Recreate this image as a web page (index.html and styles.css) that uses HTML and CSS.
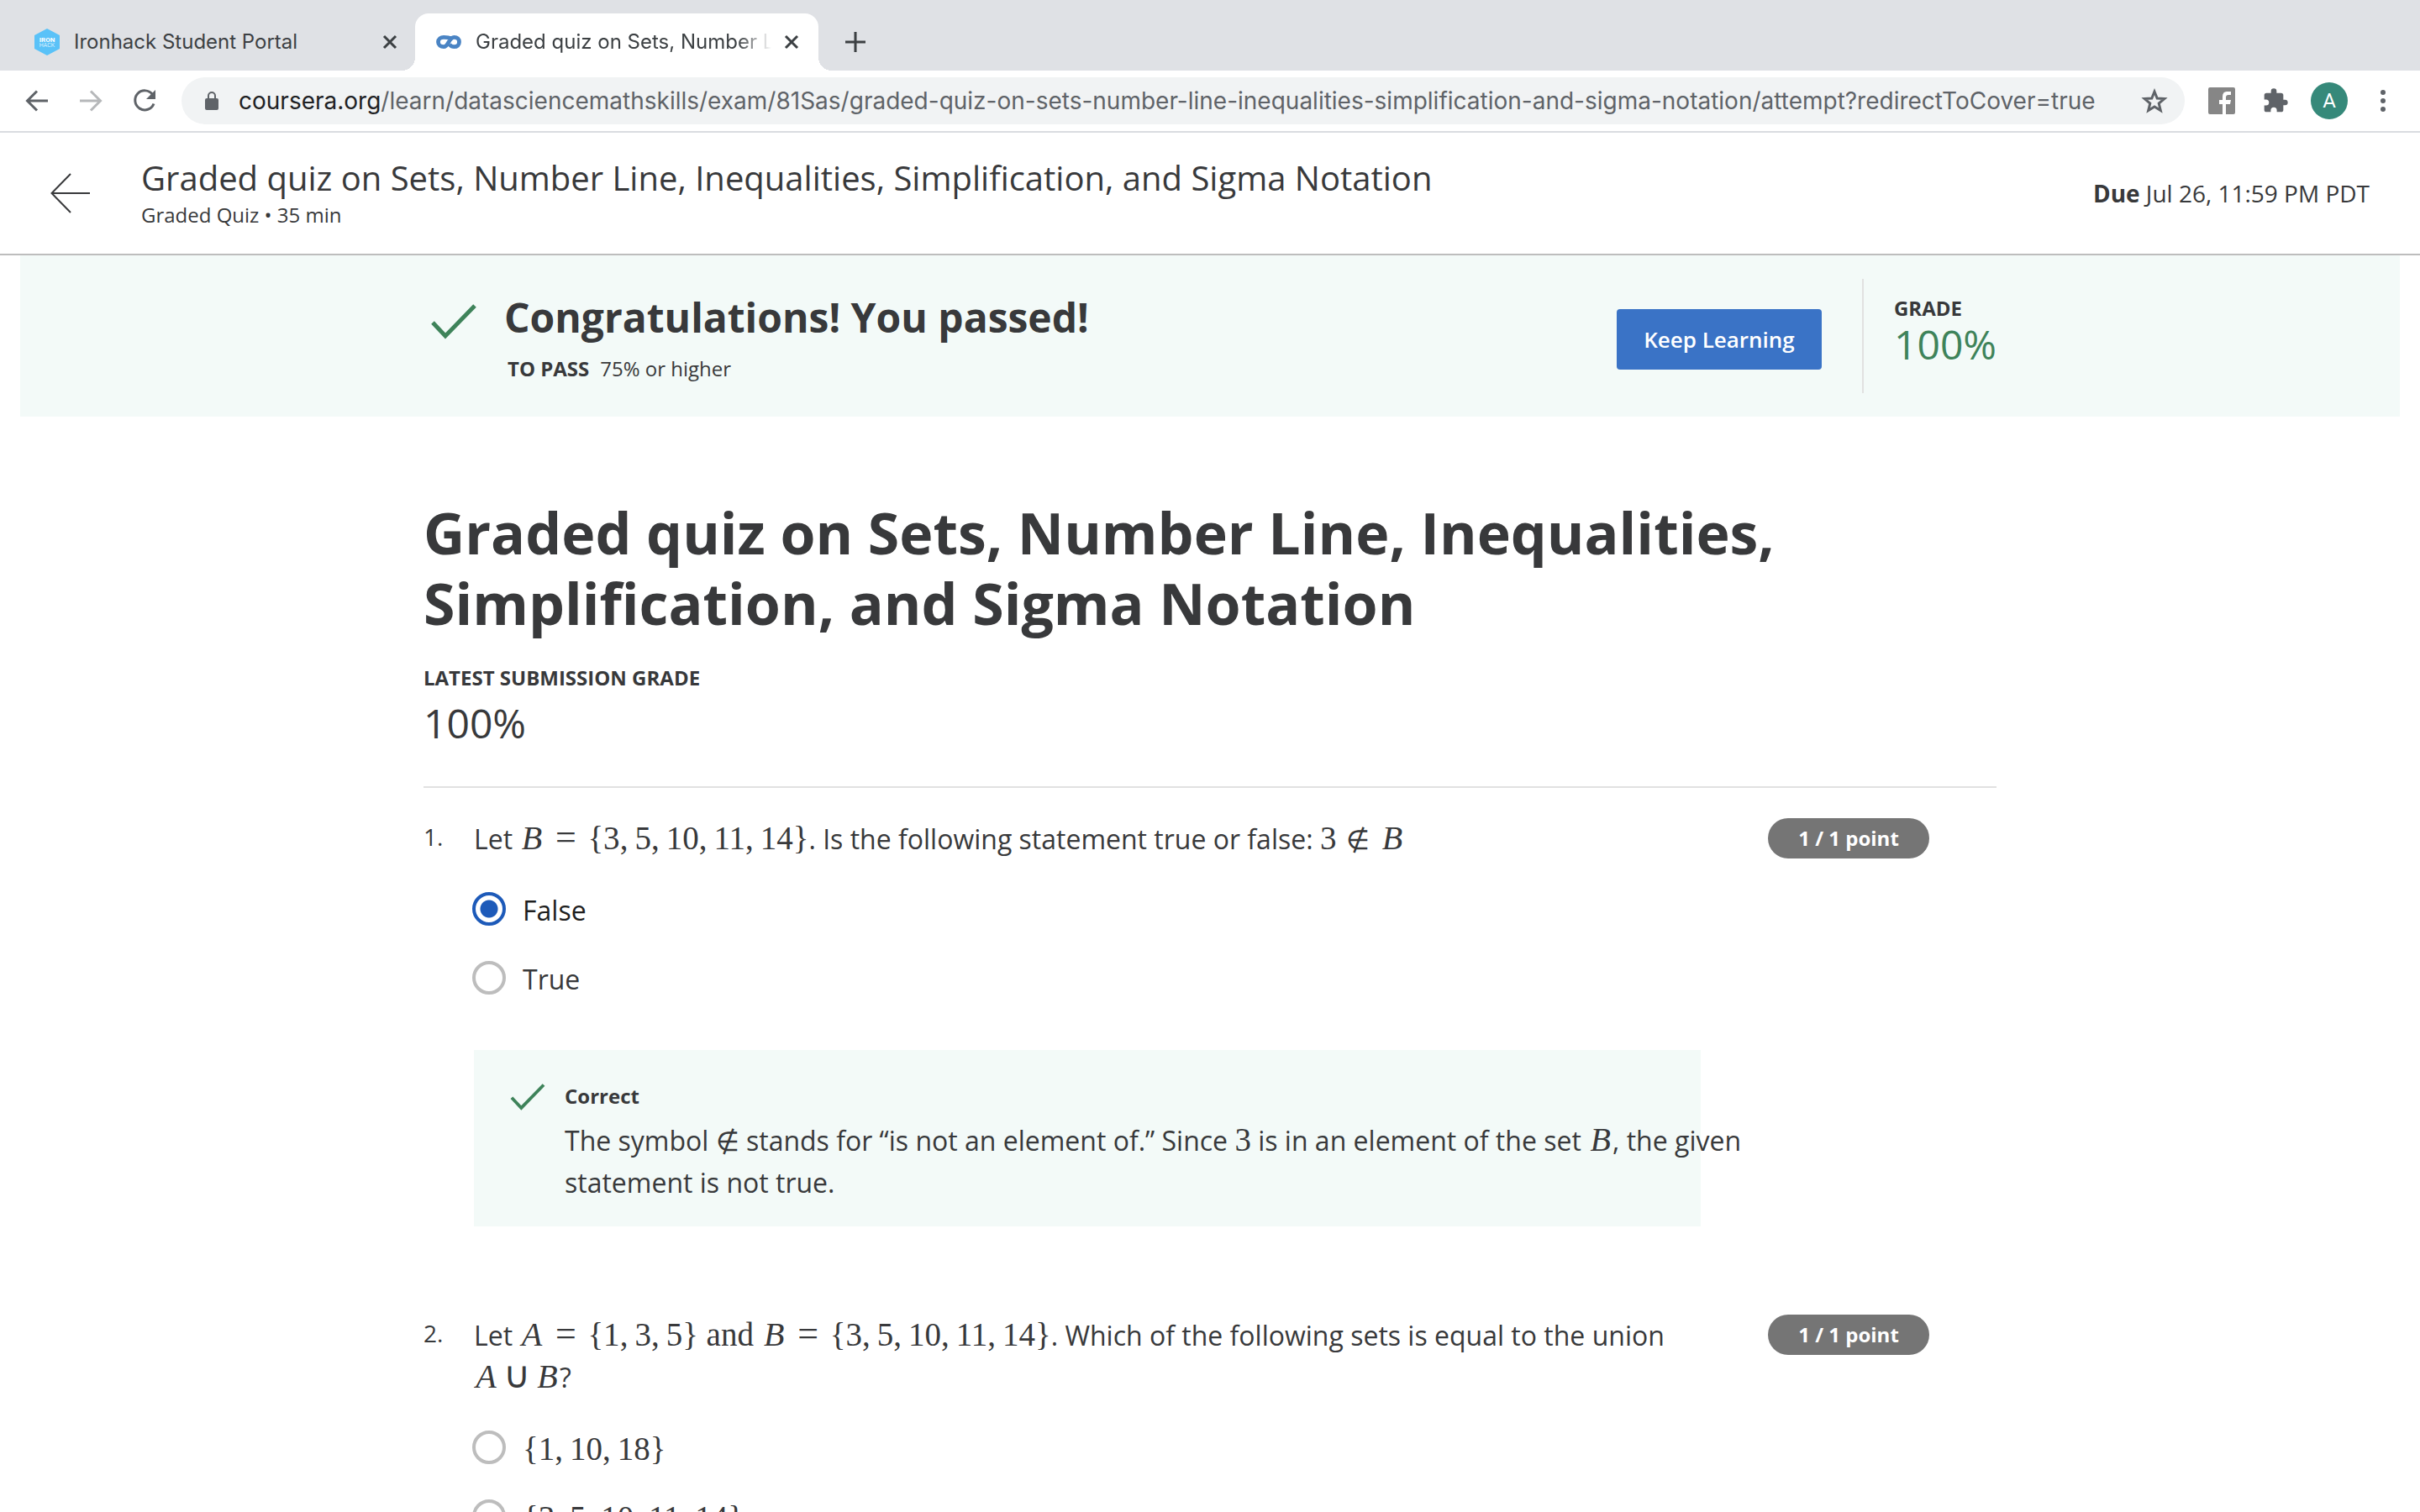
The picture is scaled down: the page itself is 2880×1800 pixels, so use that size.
FILE: index.html
```html
<!DOCTYPE html>
<html lang="en">
<head>
<meta charset="utf-8">
<title>Graded quiz on Sets, Number Line, Inequalities, Simplification, and Sigma Notation</title>
<link rel="stylesheet" href="styles.css">
</head>
<body>
<div class="browser">
  <nav class="tabs" aria-label="Tabs">
    <div class="tab">
      <svg class="favicon" viewBox="0 0 32 32" aria-hidden="true"><path d="M16 0l15 8v16l-15 8L1 24V8z" fill="#5ac2f8"/><text class="hex-bold" x="16" y="16" text-anchor="middle">IRON</text><text class="hex-light" x="16" y="22" text-anchor="middle">HACK</text></svg>
      <span class="tab-title">Ironhack Student Portal</span>
      <button class="tab-close" aria-label="Close tab"><svg viewBox="0 0 32 32"><path d="M9 9l14 14M23 9L9 23"/></svg></button>
    </div>
    <div class="tab active">
      <svg class="favicon" viewBox="0 0 32 32" aria-hidden="true"><path d="M18.500 12C16.500 10.500 14.500 10.300 10 10.300C6.500 10.300 3.500 12.500 3.500 16S6.500 21.700 10 21.700C16.500 21.700 15.500 10.300 22.500 10.300C26 10.300 28.500 12.500 28.500 16S26 21.700 22.500 21.700C20 21.700 18.500 20.800 17 19" fill="none" stroke="#4a84c4" stroke-width="4.800"/></svg>
      <span class="tab-title">Graded quiz on Sets, Number Line, Inequalities</span>
      <button class="tab-close" aria-label="Close tab"><svg viewBox="0 0 32 32"><path d="M9 9l14 14M23 9L9 23"/></svg></button>
    </div>
    <button class="new-tab" aria-label="New tab"><svg viewBox="0 0 32 32"><path d="M16 4v24M4 16h24"/></svg></button>
  </nav>

  <div class="toolbar">
    <button class="tool" aria-label="Back"><svg viewBox="0 0 32 32"><path class="line" d="M29 16H5M16 4.500L4.500 16 16 27.500"/></svg></button>
    <button class="tool faded" aria-label="Forward"><svg viewBox="0 0 32 32"><path class="line" d="M3 16h24M16 4.500L27.500 16 16 27.500"/></svg></button>
    <button class="tool" aria-label="Reload"><svg viewBox="0 0 32 32"><path class="line" d="M25.500 8.500A11.500 11.500 0 1 0 27 19.500"/><path d="M29 3v11H18z"/></svg></button>
    <div class="omnibox">
      <svg class="lock" viewBox="0 0 16 24" aria-hidden="true"><path d="M2 9h12a2 2 0 0 1 2 2v10a2 2 0 0 1-2 2H2a2 2 0 0 1-2-2V11a2 2 0 0 1 2-2z"/><path d="M4 10V6a4 4 0 0 1 8 0v4" fill="none" stroke="#5f6368" stroke-width="2"/></svg>
      <label for="url">coursera.org</label><input id="url" type="text" value="/learn/datasciencemathskills/exam/81Sas/graded-quiz-on-sets-number-line-inequalities-simplification-and-sigma-notation/attempt?redirectToCover=true">
      <button class="star" aria-label="Bookmark"><svg viewBox="0 0 32 32"><path d="M16 5l3.200 8 8.600.600-6.600 5.500 2.100 8.400L16 23l-7.300 4.500 2.100-8.400-6.600-5.500 8.600-.600z" fill="none" stroke="#5f6368" stroke-width="3"/></svg></button>
    </div>
    <button class="tool fb" aria-label="Facebook extension"><svg viewBox="0 0 32 32"><path d="M2 0h28a2 2 0 0 1 2 2v28a2 2 0 0 1-2 2h-9V20h5l1-5h-6v-3q0-3 3-3h3V5h-5q-5 0-5 6v4h-4v5h4v12H2a2 2 0 0 1-2-2V2a2 2 0 0 1 2-2z"/></svg></button>
    <button class="tool" aria-label="Extensions"><svg viewBox="0 0 24 24"><path d="M20.500 11H19V7a2 2 0 0 0-2-2h-4V3.500a2.500 2.500 0 0 0-5 0V5H4a2 2 0 0 0-2 2v3.800h1.500a2.700 2.700 0 0 1 0 5.400H2V20a2 2 0 0 0 2 2h3.800v-1.500a2.700 2.700 0 0 1 5.400 0V22H17a2 2 0 0 0 2-2v-4h1.500a2.500 2.500 0 0 0 0-5z"/></svg></button>
    <button class="tool" aria-label="Profile"><span class="avatar">A</span></button>
    <button class="tool" aria-label="Menu"><svg viewBox="0 0 32 32"><circle cx="16" cy="6" r="3"/><circle cx="16" cy="16" r="3"/><circle cx="16" cy="26" r="3"/></svg></button>
  </div>

  <header class="exam-header">
    <a class="back" href="#" aria-label="Back to course"><svg viewBox="0 0 48 48"><path d="M47 24H2M24 1L1.500 24 24 47"/></svg></a>
    <div class="exam-name">
      <div class="exam-title">Graded quiz on Sets, Number Line, Inequalities, Simplification, and Sigma Notation</div>
      <div class="small">Graded Quiz • 35 min</div>
    </div>
    <div class="due"><b>Due</b> Jul 26, 11:59 PM PDT</div>
  </header>

  <main class="page">
    <section class="banner">
      <div class="banner-inner">
        <svg class="check big" viewBox="0 0 54 42" aria-hidden="true"><path d="M2 22l15 16L52 2"/></svg>
        <div class="result">
          <h2>Congratulations! You passed!</h2>
          <p class="small"><b>TO PASS</b>75% or higher</p>
        </div>
        <button class="keep">Keep Learning</button>
        <div class="grade">
          <div class="caption">GRADE</div>
          <div class="score">100%</div>
        </div>
      </div>
    </section>

    <div class="quiz">
      <h1>Graded quiz on Sets, Number Line, Inequalities, Simplification, and Sigma Notation</h1>
      <div class="caption">LATEST SUBMISSION GRADE</div>
      <div class="latest">100%</div>

      <section class="question first">
        <span class="number">1.</span>
        <div class="body">
          <p class="prompt">Let <span class="math"><i>B</i><span class="rel eq">=</span>{3<s>,</s>5<s>,</s>10<s>,</s>11<s>,</s>14}</span>. Is the following statement true or false: <span class="math">3<span class="rel notin">∉</span><i>B</i></span></p>
          <div class="options">
            <label class="option chosen"><input type="radio" name="q1" checked><span>False</span></label>
            <label class="option"><input type="radio" name="q1"><span>True</span></label>
          </div>
          <div class="feedback">
            <svg class="check" viewBox="0 0 54 42" aria-hidden="true"><path d="M2 22l15 16L52 2"/></svg>
            <div class="feedback-body">
              <div class="caption">Correct</div>
              <p>The symbol <span class="math notin">∉</span> stands for “is not an element of.” Since <span class="math">3</span> is in an element of the set <span class="math"><i>B</i></span>, the given statement is not true.</p>
            </div>
          </div>
        </div>
        <span class="points">1 / 1 point</span>
      </section>

      <section class="question">
        <span class="number">2.</span>
        <div class="body">
          <p class="prompt">Let <span class="math"><i>A</i><span class="rel eq">=</span>{1<s>,</s>3<s>,</s>5} and <i>B</i><span class="rel eq">=</span>{3<s>,</s>5<s>,</s>10<s>,</s>11<s>,</s>14}</span>. Which of the following sets is equal to the union <span class="math"><i>A</i><span class="rel cup">∪</span><i>B</i></span>?</p>
          <div class="options">
            <label class="option"><input type="radio" name="q2"><span class="math">{1<s>,</s>10<s>,</s>18}</span></label>
            <label class="option"><input type="radio" name="q2"><span class="math">{3<s>,</s>5<s>,</s>10<s>,</s>11<s>,</s>14}</span></label>
          </div>
        </div>
        <span class="points">1 / 1 point</span>
      </section>
    </div>
  </main>
</div>
</body>
</html>
```
FILE: styles.css
```css
* { box-sizing: border-box; }
body, h1, h2, p { margin: 0; }
body { font-family: "Open Sans", sans-serif; color: #38393b; background: #fff; }
button { border: 0; background: none; padding: 0; font: inherit; display: flex; align-items: center; justify-content: center; }
svg { display: block; }

.browser { height: 100vh; display: flex; flex-direction: column; }

/* Tab strip */
.tabs { flex: none; height: 84px; padding: 16px 16px 0; display: flex; background: #dfe1e5; font: 24px/32px Inter, sans-serif; color: #3c4043; }
.tab { position: relative; width: 478px; height: 68px; padding: 0 14px 0 24px; display: flex; align-items: center; }
.tab.active { width: 480px; padding-right: 16px; background: #fff; border-radius: 16px 16px 0 0; }
.tab.active::before, .tab.active::after { content: ""; position: absolute; bottom: 0; width: 16px; height: 16px; }
.tab.active::before { left: -16px; background: radial-gradient(circle at 0 0, #dfe1e5 16px, #fff 16px); }
.tab.active::after { right: -16px; background: radial-gradient(circle at 100% 0, #dfe1e5 16px, #fff 16px); }
.favicon { width: 32px; height: 32px; margin-right: 16px; flex: none; }
.hex-bold { font: 700 8px Roboto, sans-serif; fill: #fff; }
.hex-light { font: 300 7px Roboto, sans-serif; fill: #fff; }
.tab-title { flex: 1; min-width: 0; overflow: hidden; white-space: nowrap; margin-right: 8px; }
.active .tab-title { -webkit-mask-image: linear-gradient(to left, transparent, #000 40px); mask-image: linear-gradient(to left, transparent, #000 40px); }
.tab-close svg, .new-tab svg { width: 32px; height: 32px; fill: none; stroke: #3c4043; stroke-width: 3; }
.new-tab { width: 44px; margin-left: 22px; }

/* Toolbar */
.toolbar { flex: none; height: 74px; padding: 0 12px; display: flex; align-items: center; border-bottom: 2px solid #dadce0; }
.tool { width: 64px; height: 64px; flex: none; }
.tool svg { width: 32px; height: 32px; fill: #5f6368; }
.tool .line { fill: none; stroke: #5f6368; stroke-width: 3; }
.faded { opacity: .45; }
.fb svg { fill: #868686; }
.avatar { width: 44px; height: 44px; border-radius: 50%; background: #36897a; color: #fff; font: 24px/44px Roboto, sans-serif; }
.omnibox { flex: 1; min-width: 0; height: 56px; margin: 0 12px; padding: 0 20px 0 28px; display: flex; align-items: center; background: #f1f3f4; border-radius: 28px; font: 28px/40px Inter, sans-serif; color: #202124; }
.lock { width: 16px; height: 24px; margin-right: 24px; fill: #5f6368; }
.omnibox input { flex: 1; min-width: 0; border: 0; padding: 0; background: none; font: inherit; color: #5f6368; outline: 0; }
.star svg { width: 32px; height: 32px; }

/* Exam header */
.exam-header { flex: none; height: 146px; padding: 0 60px; display: flex; align-items: center; border-bottom: 2px solid #bdbdbd; }
.back svg { width: 48px; height: 48px; fill: none; stroke: #38393b; stroke-width: 2; }
.exam-name { flex: 1; margin-left: 60px; }
.exam-title { font-size: 40px; line-height: 50px; margin-bottom: 1px; }
.small { font-size: 24px; line-height: 36px; }
.due { font-size: 28px; line-height: 40px; }

/* Result banner */
.page { flex: 1; min-height: 0; overflow: hidden auto; scrollbar-width: none; }
.banner { margin: 0 24px; padding: 28px 0; background: #f3faf8; }
.banner-inner, .quiz { max-width: 1872px; margin: 0 auto; }
.banner-inner { height: 136px; display: flex; }
.check { width: 42px; height: 32px; flex: none; fill: none; stroke: #3e835a; stroke-width: 5; }
.check.big { width: 54px; height: 42px; margin: 30px 33px 0 9px; }
.result { flex: 1; padding-top: 10px; }
.result h2 { font-size: 48px; line-height: 72px; }
.result .small { padding: 7px 0 0 4px; }
.result b { margin-right: 13px; }
.keep { width: 244px; height: 72px; margin: 36px 48px 0 0; border-radius: 4px; background: #3a73c6; color: #fff; font-size: 26px; font-weight: 600; }
.grade { border-left: 2px solid #e1e1e1; padding: 17px 0 0 36px; }
.caption { font-size: 24px; line-height: 36px; font-weight: 700; }
.score, .latest { font-size: 48px; }
.score { line-height: 50px; color: #3e835a; }
.latest { line-height: 72px; padding-bottom: 39px; border-bottom: 2px solid #e1e1e1; }

/* Quiz */
.quiz { padding-top: 96px; }
h1 { font-size: 68px; line-height: 84px; margin-bottom: 29px; }
.question { display: grid; grid-template-columns: 60px 1fr 192px; padding-right: 80px; margin-top: 105px; font-size: 32px; line-height: 50px; }
.question.first { margin-top: 36px; }
.number { font-size: 28px; line-height: 44px; }
.body { margin-right: 80px; min-width: 0; }
.points { height: 48px; border-radius: 24px; background: #757575; color: #fff; font-size: 24px; line-height: 48px; font-weight: 700; text-align: center; }
.options { display: grid; gap: 38px; margin-top: 38px; }
.option { display: flex; gap: 20px; margin-left: -2px; line-height: 44px; }
.chosen { color: #1f1f1f; }
.option input { appearance: none; width: 40px; height: 40px; margin: 0; border: 4px solid #bdbdbd; border-radius: 50%; }
.option input:checked { border-color: #1d5ab9; background: radial-gradient(circle, #1d5ab9 10px, #fff 11px); }
.feedback { display: flex; margin-top: 62px; padding: 37px 0 27px 43px; background: #f3faf8; }
.feedback .check { margin: 3px 23px 0 0; }
.feedback-body { flex: 1; margin-right: -80px; }
.feedback p { margin-top: 10px; }

/* Typeset maths */
.math { font-family: "Liberation Serif", "DejaVu Serif", serif; font-size: 39px; line-height: 44px; white-space: nowrap; }
.math i { display: inline-block; min-width: 29px; text-align: center; font-size: 40px; line-height: 40px; }
.math s { text-decoration: none; margin-right: 8px; }
.rel { display: inline-block; width: 30px; margin: 0 11px; text-align: center; line-height: 36px; }
.eq { font-size: 44px; }
.notin { font-family: "DejaVu Sans", sans-serif; font-weight: 200; font-size: 32px; }
.rel.cup { width: 32px; margin: 0 6px; font-family: "DejaVu Sans", sans-serif; font-weight: 200; font-size: 44px; }
```
